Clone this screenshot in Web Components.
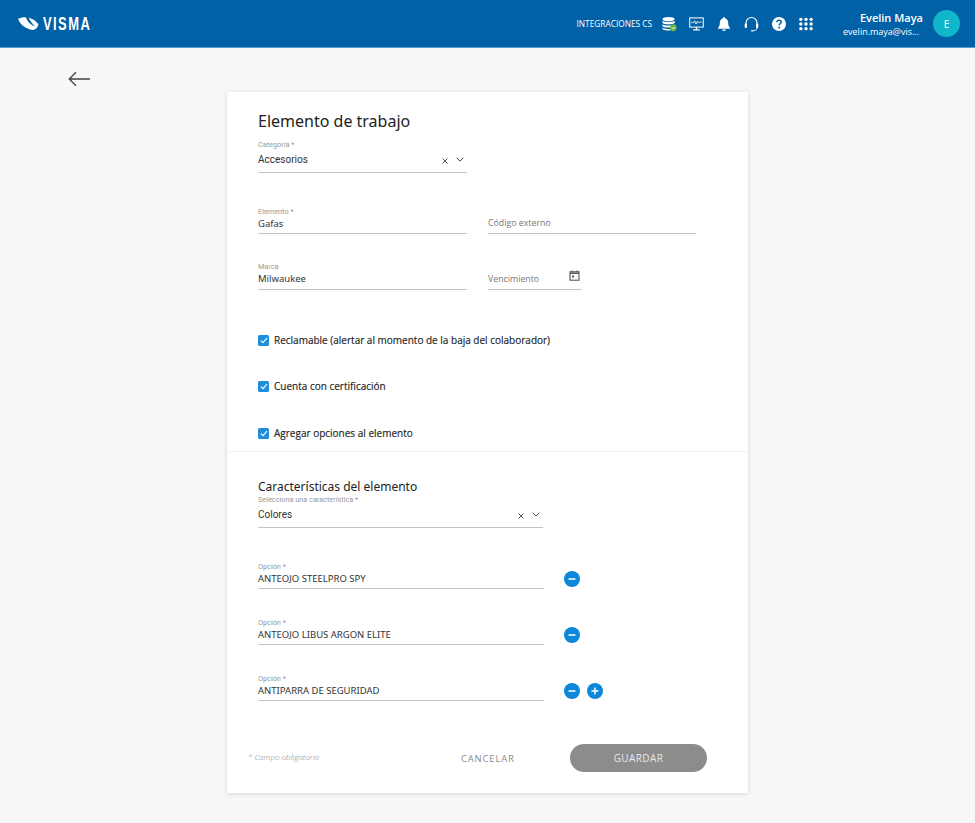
<!DOCTYPE html>
<html lang="es">
<head>
<meta charset="utf-8">
<title>Elemento de trabajo</title>
<style>
  html,body{margin:0;padding:0;background:#f7f7f7;font-family:"Open Sans",sans-serif}
</style>
</head>
<body>
<app-shell>
  <app-header slot="head"></app-header>
  <back-link slot="side"></back-link>
  <form-card>
    <h-title size="16" top="20" height="19" slot="a">Elemento de trabajo</h-title>
    <text-field slot="a" style="width:209px;margin-top:9px" label="Categoría *" value="Accesorios" roboto combo></text-field>
    <field-row slot="a" style="margin-top:34px">
      <text-field style="width:209px" label="Elemento *" value="Gafas"></text-field>
      <text-field style="width:208px" placeholder="Código externo"></text-field>
    </field-row>
    <field-row slot="a" style="margin-top:28px">
      <text-field style="width:209px;--line:18px" label="Marca" value="Milwaukee"></text-field>
      <text-field style="width:94px" placeholder="Vencimiento" date></text-field>
    </field-row>
    <check-row slot="a" style="margin-top:44px">Reclamable (alertar al momento de la baja del colaborador)</check-row>
    <check-row slot="a" style="margin-top:33px">Cuenta con certificación</check-row>
    <check-row slot="a" style="margin-top:34px">Agregar opciones al elemento</check-row>

    <h-title size="12" top="27" height="15" slot="b">Características del elemento</h-title>
    <text-field slot="b" style="width:285px;margin-top:1px" label="Selecciona una característica *" value="Colores" roboto combo></text-field>
    <option-row slot="b" style="margin-top:34px" value="ANTEOJO STEELPRO SPY"></option-row>
    <option-row slot="b" style="margin-top:29px" value="ANTEOJO LIBUS ARGON ELITE"></option-row>
    <option-row slot="b" style="margin-top:29px" value="ANTIPARRA DE SEGURIDAD" add></option-row>
    <form-footer slot="b"></form-footer>
  </form-card>
</app-shell>

<script>
class AppShell extends HTMLElement {
  constructor(){
    super();
    this.attachShadow({mode:'open'}).innerHTML = `
      <style>
        :host{display:block;min-height:823px;background:#f7f7f7}
        .main{display:grid;grid-template-columns:227px 521px}
      </style>
      <slot name="head"></slot>
      <div class="main"><div><slot name="side"></slot></div><slot></slot></div>`;
  }
}

class AppHeader extends HTMLElement {
  constructor(){
    super();
    this.attachShadow({mode:'open'}).innerHTML = `
      <style>
        :host{display:flex;align-items:center;height:47px;background:#0061a6;border-bottom:1px solid #5a9bcb;color:#fff;font-family:"Open Sans",sans-serif}
        .logo{display:flex;align-items:center;margin-left:18px}
        .word{font:700 18px/20px "Liberation Sans",sans-serif;letter-spacing:2px;transform:scaleX(.72);transform-origin:left center;margin-left:4px;width:50px}
        .right{margin-left:auto;display:flex;align-items:center}
        .integ{font-size:8.300px;line-height:14px;margin-right:10px}
        .icons{display:flex;align-items:center;gap:13px}
        .icons svg{display:block}
        .icons svg:first-child{margin-right:-1px}
        .user{width:82px;margin-left:28px;text-align:right;white-space:nowrap;padding-top:3px}
        .name{font-size:11px;font-weight:600;line-height:14px}
        .mail{font-size:9px;line-height:14px;text-align:left;margin-left:2px}
        .avatar{width:27px;height:27px;border-radius:50%;background:#10b7cb;margin:0 15px 0 10px;display:flex;align-items:center;justify-content:center;font-size:10px}
      </style>
      <div class="logo">
        <svg width="21" height="14" viewBox="0 0 21 14">
          <path d="M0 1.800C3 .2 6.500-.2 10 .4C14 1.200 18.500 4 20.500 7.500C19.500 11.500 16.500 13.500 13.500 12.800C7.500 11.500 2 7.500 0 1.800Z" fill="#fff"/>
          <path d="M7.500-.5C9 4 12 7.500 17.500 9.800C14 6.500 11.500 3.500 10.300-.5Z" fill="#0061a6"/>
        </svg>
        <span class="word">VISMA</span>
      </div>
      <div class="right">
        <span class="integ">INTEGRACIONES CS</span>
        <div class="icons">
          <svg width="15" height="16" viewBox="0 0 16 16" fill="#fff">
            <ellipse cx="7" cy="2.800" rx="6.500" ry="2.300"/>
            <path d="M.5 4.500C1.500 6.300 12.500 6.300 13.500 4.500V7C12.500 8.800 1.500 8.800 .5 7Z"/>
            <path d="M.5 8.200C1.500 10 12.500 10 13.500 8.200V10.500C12.500 12.300 1.500 12.300 .5 10.500Z"/>
            <path d="M.5 11.800C1.500 13.500 9 13.600 9 13.600V15C5 15 1.500 14.500 .5 13.200Z"/>
            <circle cx="12" cy="12" r="3.600" fill="#6cb33f"/>
            <path d="M10.300 12l1.300 1.300 2.200-2.400" fill="none" stroke="#fff" stroke-width="1"/>
          </svg>
          <svg width="15" height="16" viewBox="0 0 16 16" fill="none" stroke="#fff">
            <rect x=".8" y="1.500" width="14.400" height="9.800" stroke-width="1.100"/>
            <path d="M2.500 6.500H5L6 4.500 7.500 8 9 5l1 2 1-1h2.500" stroke-width=".9"/>
            <path d="M8 11.500V13.500M4.500 14.300H11.500" stroke-width="1.400"/>
          </svg>
          <svg width="14" height="16" viewBox="0 0 15 16" fill="#fff">
            <path d="M7.500 .8C8.300 .8 8.800 1.300 8.800 2C11 2.600 12 4.400 12 7C12 9.800 12.800 11 14 12.300V13H1V12.300C2.200 11 3 9.800 3 7C3 4.400 4 2.600 6.200 2C6.200 1.300 6.700 .8 7.500 .8Z"/>
            <path d="M5.500 14H9.500C9.300 15 8.500 15.600 7.500 15.600S5.700 15 5.500 14Z"/>
          </svg>
          <svg width="15" height="16" viewBox="0 0 15 16" fill="none" stroke="#fff">
            <path d="M2 10V7A5.500 5.500 0 0 1 13 7V10" stroke-width="1.200"/>
            <rect x=".7" y="7.500" width="2.300" height="4.500" rx="1" fill="#fff" stroke="none"/>
            <rect x="12" y="7.500" width="2.300" height="4.500" rx="1" fill="#fff" stroke="none"/>
            <path d="M13 12C13 14 11 14.800 8.500 14.800" stroke-width="1"/>
            <circle cx="8" cy="14.800" r=".9" fill="#fff" stroke="none"/>
          </svg>
          <svg width="14" height="14" viewBox="0 0 14 14">
            <circle cx="7" cy="7" r="7" fill="#fff"/>
            <path d="M4.900 5.300C5 3.900 6 3.200 7.100 3.200C8.400 3.200 9.300 4 9.300 5.100C9.300 6.600 7.200 6.700 7.200 8.300" fill="none" stroke="#0061a6" stroke-width="1.500"/>
            <circle cx="7.200" cy="10.400" r="1" fill="#0061a6"/>
          </svg>
          <svg width="14" height="14" viewBox="0 0 15 14" fill="#fff">
            <circle cx="2" cy="2" r="1.800"/><circle cx="7.500" cy="2" r="1.800"/><circle cx="13" cy="2" r="1.800"/>
            <circle cx="2" cy="7" r="1.800"/><circle cx="7.500" cy="7" r="1.800"/><circle cx="13" cy="7" r="1.800"/>
            <circle cx="2" cy="12" r="1.800"/><circle cx="7.500" cy="12" r="1.800"/><circle cx="13" cy="12" r="1.800"/>
          </svg>
        </div>
        <div class="user">
          <div class="name">Evelin Maya</div>
          <div class="mail">evelin.maya@vis...</div>
        </div>
        <div class="avatar">E</div>
      </div>`;
  }
}

class BackLink extends HTMLElement {
  constructor(){
    super();
    this.attachShadow({mode:'open'}).innerHTML = `
      <style>:host{display:block;padding:23px 0 0 68px} svg{display:block}</style>
      <svg width="23" height="16" viewBox="0 0 23 16" fill="none" stroke="#444" stroke-width="1.300">
        <path d="M22 8H1.500M8 1.200L1.200 8 8 14.800"/>
      </svg>`;
  }
}

class FormCard extends HTMLElement {
  constructor(){
    super();
    this.attachShadow({mode:'open'}).innerHTML = `
      <style>
        :host{display:block;width:521px;height:701px;margin-top:44px;background:#fff;border-radius:2px;box-shadow:0 1px 5px rgba(0,0,0,.13)}
        .a{padding:0 31px;height:360px;box-sizing:border-box;border-bottom:1px solid #f2f2f2;overflow:hidden}
        .b{padding:0 41px 0 31px}
      </style>
      <div class="a"><slot name="a"></slot></div>
      <div class="b"><slot name="b"></slot></div>`;
  }
}

class HTitle extends HTMLElement {
  constructor(){
    super();
    const size = this.getAttribute('size'), top = this.getAttribute('top'), h = this.getAttribute('height');
    this.attachShadow({mode:'open'}).innerHTML = `
      <style>:host{display:block;margin-top:${top}px;font:400 ${size}px/${h}px "Noto Sans","Open Sans",sans-serif;color:#222}</style>
      <slot></slot>`;
  }
}

class FieldRow extends HTMLElement {
  constructor(){
    super();
    this.attachShadow({mode:'open'}).innerHTML = `
      <style>:host{display:flex;gap:21px;align-items:flex-end}</style><slot></slot>`;
  }
}

class TextField extends HTMLElement {
  constructor(){
    super();
    const label = this.getAttribute('label') || '';
    const value = this.getAttribute('value') || '';
    const ph = this.getAttribute('placeholder') || '';
    let icons = '';
    if (this.hasAttribute('combo')) icons = `<svg class="x" width="6" height="6" viewBox="0 0 6 6" stroke="#555" stroke-width="1" fill="none"><path d="M.5.5l5 5M5.500.5l-5 5"/></svg>
      <svg class="chev" width="8" height="5" viewBox="0 0 8 5" stroke="#444" stroke-width="1" fill="none"><path d="M.6.7L4 4.100 7.400.7"/></svg>`;
    if (this.hasAttribute('date')) icons = `<svg class="cal" width="11" height="11" viewBox="0 0 11 11" fill="none" stroke="#555"><rect x="1" y="1.800" width="9" height="8.400" stroke-width="1.100"/><path d="M1 3.200H10" stroke-width="1.500"/><path d="M3 .5V2M8 .5V2" stroke-width="1.100"/><rect x="3" y="5.500" width="2" height="2" fill="#555" stroke="none"/></svg>`;
    this.attachShadow({mode:'open'}).innerHTML = `
      <style>
        :host{display:block;border-bottom:1px solid #c4c4c4;color:#333}
        .label{font:400 7.300px/9px Roboto,sans-serif;color:#999;height:9px;white-space:nowrap}
        .line{display:flex;align-items:flex-start;height:var(--line,17px)}
        :host([combo]) .line{height:23px;padding-top:3px;box-sizing:border-box}
        .value{flex:1;font:400 9.500px/16px "Noto Sans","Open Sans",sans-serif;white-space:nowrap}
        :host([roboto]) .value{font:400 10px/16px Roboto,sans-serif}
        .ph{flex:1;font:400 8.800px/16px "Open Sans",sans-serif;color:#777;white-space:nowrap}
        .x{margin:5.500px 8px 0 0}
        .chev{margin:5px 3px 0 0}
        :host([placeholder]) .line{height:21px;align-items:center}
        .cal{margin:-6px 2px 0 0}
      </style>
      ${label ? `<div class="label">${label}</div>` : ''}
      <div class="line">${ph ? `<span class="ph">${ph}</span>` : `<span class="value">${value}</span>`}${icons}</div>`;
  }
}

class CheckRow extends HTMLElement {
  constructor(){
    super();
    this.attachShadow({mode:'open'}).innerHTML = `
      <style>
        :host{display:flex;align-items:center;gap:5px;height:13px;font:500 10px/12px "Open Sans",sans-serif;-webkit-text-stroke:.15px #222;color:#222;white-space:nowrap}
        .box{width:11px;height:11px;border-radius:1.500px;background:#1f8fdb;display:flex;align-items:center;justify-content:center}
        .text{margin-top:-1px}
      </style>
      <span class="box"><svg width="8" height="7" viewBox="0 0 8 7" fill="none" stroke="#fff" stroke-width="1.100"><path d="M1 3.600l2 2L7 1.200"/></svg></span>
      <span class="text"><slot></slot></span>`;
  }
}

class RoundBtn extends HTMLElement {
  constructor(){
    super();
    const plus = this.hasAttribute('plus');
    this.attachShadow({mode:'open'}).innerHTML = `
      <style>
        :host{display:block;width:16px;height:16px;margin-bottom:2px}
        svg{display:block}
      </style>
      <svg width="16" height="16" viewBox="0 0 16 16">
        <circle cx="8" cy="8" r="8" fill="#0d87d9"/>
        <path d="M4.500 8H11.500${plus ? 'M8 4.500V11.500' : ''}" stroke="#fff" stroke-width="1.500" fill="none"/>
      </svg>`;
  }
}

class OptionRow extends HTMLElement {
  constructor(){
    super();
    const v = this.getAttribute('value');
    this.attachShadow({mode:'open'}).innerHTML = `
      <style>
        :host{display:flex;align-items:flex-end;gap:7px}
        text-field{width:286px;margin-right:13px}
      </style>
      <text-field label="Opción *" value="${v}"></text-field>
      <round-btn></round-btn>
      ${this.hasAttribute('add') ? '<round-btn plus></round-btn>' : ''}`;
  }
}

class FormFooter extends HTMLElement {
  constructor(){
    super();
    this.attachShadow({mode:'open'}).innerHTML = `
      <style>
        :host{display:flex;align-items:center;margin:43px 0 0 -10px;height:28px;width:459px;font-family:"Open Sans",sans-serif}
        .req{font:italic 300 8px/12px "Open Sans",sans-serif;color:#888;width:213px;margin-top:-3px}
        .cancel{font-size:9.500px;letter-spacing:.8px;color:#8b8b8b;width:109px}
        .save{width:137px;height:28px;border-radius:14px;background:#8c8c8c;color:#e8e8e8;font-size:10px;font-weight:500;letter-spacing:.4px;display:flex;align-items:center;justify-content:center}
      </style>
      <span class="req">* Campo obligatorio</span>
      <span class="cancel">CANCELAR</span>
      <span class="save">GUARDAR</span>`;
  }
}

customElements.define('app-shell', AppShell);
customElements.define('app-header', AppHeader);
customElements.define('back-link', BackLink);
customElements.define('form-card', FormCard);
customElements.define('h-title', HTitle);
customElements.define('field-row', FieldRow);
customElements.define('text-field', TextField);
customElements.define('check-row', CheckRow);
customElements.define('round-btn', RoundBtn);
customElements.define('option-row', OptionRow);
customElements.define('form-footer', FormFooter);
</script>
</body>
</html>
